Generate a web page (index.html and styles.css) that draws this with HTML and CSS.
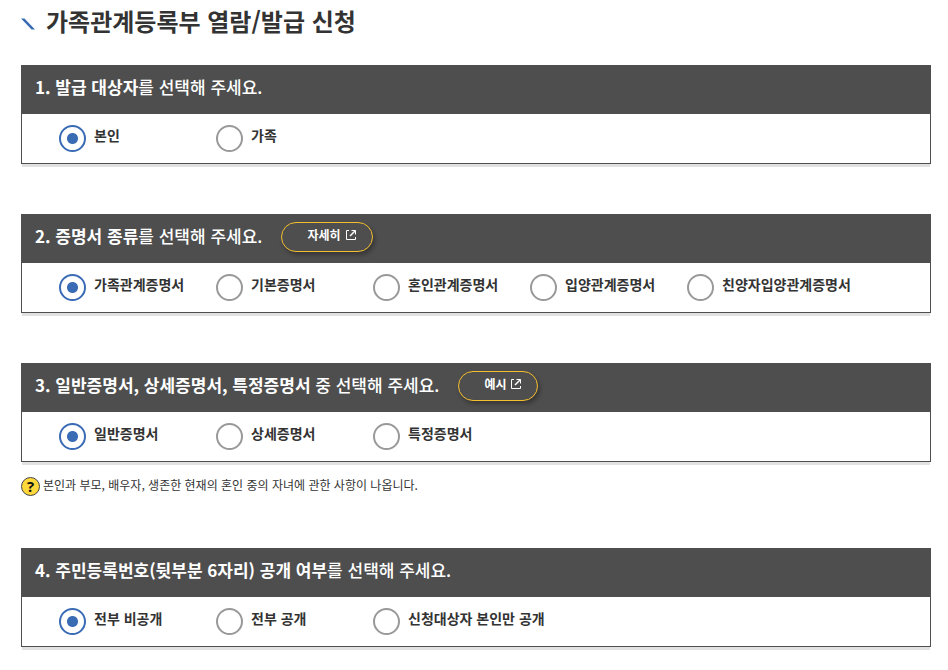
FILE: index.html
```
<!DOCTYPE html>
<html lang="ko">
<head>
  <meta charset="UTF-8" />
  <meta name="viewport" content="width=device-width, initial-scale=1" />
  <title>가족관계등록부 열람/발급 신청</title>
  <link rel="stylesheet" href="styles.css">
</head>
<body>
  <main class="page">
    <h1 class="page-title">
      <svg class="title-mark" width="14" height="12" viewBox="0 0 14 12" aria-hidden="true">
        <path d="M0 0.5h3.5L14 11.5h-3.5z" fill="#3a6bb5" />
      </svg>
      가족관계등록부 열람/발급 신청
    </h1>

    <form>
      <section class="card">
        <div class="card-head">
          <h2><strong>1. 발급 대상자</strong>를 선택해 주세요.</h2>
        </div>
        <div class="card-body">
          <label class="option"><input type="radio" name="target" checked><span>본인</span></label>
          <label class="option"><input type="radio" name="target"><span>가족</span></label>
        </div>
      </section>

      <section class="card">
        <div class="card-head">
          <h2><strong>2. 증명서 종류</strong>를 선택해 주세요.</h2>
          <button type="button" class="more-btn">자세히
            <svg width="12" height="12" viewBox="0 0 12 12" fill="none" stroke="#fff" aria-hidden="true">
              <path d="M4 1.5H1.5v9h9V8" />
              <path d="M6.5 1.5h4v4" />
              <path d="M10.5 1.5L5 7" stroke-width="1.4" />
            </svg>
          </button>
        </div>
        <div class="card-body">
          <label class="option"><input type="radio" name="cert" checked><span>가족관계증명서</span></label>
          <label class="option"><input type="radio" name="cert"><span>기본증명서</span></label>
          <label class="option"><input type="radio" name="cert"><span>혼인관계증명서</span></label>
          <label class="option"><input type="radio" name="cert"><span>입양관계증명서</span></label>
          <label class="option"><input type="radio" name="cert"><span>친양자입양관계증명서</span></label>
        </div>
      </section>

      <section class="card">
        <div class="card-head">
          <h2><strong>3. 일반증명서, 상세증명서, 특정증명서</strong> 중 선택해 주세요.</h2>
          <button type="button" class="more-btn">예시
            <svg width="12" height="12" viewBox="0 0 12 12" fill="none" stroke="#fff" aria-hidden="true">
              <path d="M4 1.5H1.5v9h9V8" />
              <path d="M6.5 1.5h4v4" />
              <path d="M10.5 1.5L5 7" stroke-width="1.4" />
            </svg>
          </button>
        </div>
        <div class="card-body">
          <label class="option"><input type="radio" name="detail" checked><span>일반증명서</span></label>
          <label class="option"><input type="radio" name="detail"><span>상세증명서</span></label>
          <label class="option"><input type="radio" name="detail"><span>특정증명서</span></label>
        </div>
      </section>
      <p class="note">
        <span class="note-icon">?</span>
        <span class="note-text">본인과 부모, 배우자, 생존한 현재의 혼인 중의 자녀에 관한 사항이 나옵니다.</span>
      </p>

      <section class="card">
        <div class="card-head">
          <h2><strong>4. 주민등록번호(뒷부분 6자리) 공개 여부</strong>를 선택해 주세요.</h2>
        </div>
        <div class="card-body">
          <label class="option"><input type="radio" name="open" checked><span>전부 비공개</span></label>
          <label class="option"><input type="radio" name="open"><span>전부 공개</span></label>
          <label class="option"><input type="radio" name="open"><span>신청대상자 본인만 공개</span></label>
        </div>
      </section>
    </form>
  </main>
</body>
</html>
```
FILE: styles.css
```
* {
  box-sizing: border-box;
}

body {
  margin: 0;
  background: #fff;
  color: #333;
  font-family: "Noto Sans CJK KR", sans-serif;
}

.page {
  padding: 3px 17px 20px 21px;
}

.page-title {
  display: flex;
  align-items: center;
  gap: 11px;
  margin: 0 0 26px;
  font-size: 24px;
  line-height: 36px;
}

.title-mark {
  margin-top: 6px;
}

.card {
  margin-bottom: 50px;
  border: 1px solid #4e4e4e;
  box-shadow: 0 4px 0 -1px #e1e1e1;
}

.card:last-child {
  margin-bottom: 0;
}

.card-head {
  display: flex;
  align-items: center;
  gap: 19px;
  height: 48px;
  padding: 0 13px 4px;
  background: #4e4e4e;
  color: #fff;
}

.card-head h2 {
  margin: 0;
  padding-bottom: 2px;
  font-size: 17px;
  font-weight: 500;
  line-height: 28px;
}

.more-btn {
  display: flex;
  align-items: center;
  gap: 4px;
  height: 30px;
  padding: 0 15px 5px 25px;
  border: 1px solid #f5be2d;
  border-radius: 15px;
  background: transparent;
  box-shadow: 2px 3px 4px rgba(0, 0, 0, 0.3);
  color: #fff;
  font-family: inherit;
  font-size: 12px;
  font-weight: 700;
  cursor: pointer;
}

.card-body {
  display: flex;
  flex-wrap: wrap;
  padding: 11px 0 11px 37px;
}

.option {
  display: flex;
  align-items: center;
  gap: 8px;
  min-width: 157px;
  cursor: pointer;
}

.option span {
  padding-bottom: 7px;
  font-size: 14px;
  font-weight: 700;
  line-height: 20px;
}

.option input {
  appearance: none;
  width: 27px;
  height: 27px;
  margin: 0;
  border: 2px solid #999;
  border-radius: 50%;
  background: #fff;
  cursor: pointer;
}

.option input:checked {
  border-color: #3a6bb5;
  background: radial-gradient(circle, #3a6bb5 5px, #fff 6px);
}

.note {
  display: flex;
  align-items: center;
  gap: 3px;
  margin: -36px 0 51px;
}

.note-icon {
  width: 19px;
  height: 19px;
  border: 1px solid #444;
  border-radius: 50%;
  background: #ffd83b;
  color: #111;
  font-family: "Open Sans", sans-serif;
  font-size: 15px;
  font-weight: 700;
  line-height: 17px;
  text-align: center;
}

.note-text {
  padding-bottom: 3px;
  font-size: 12px;
  line-height: 18px;
}
```
